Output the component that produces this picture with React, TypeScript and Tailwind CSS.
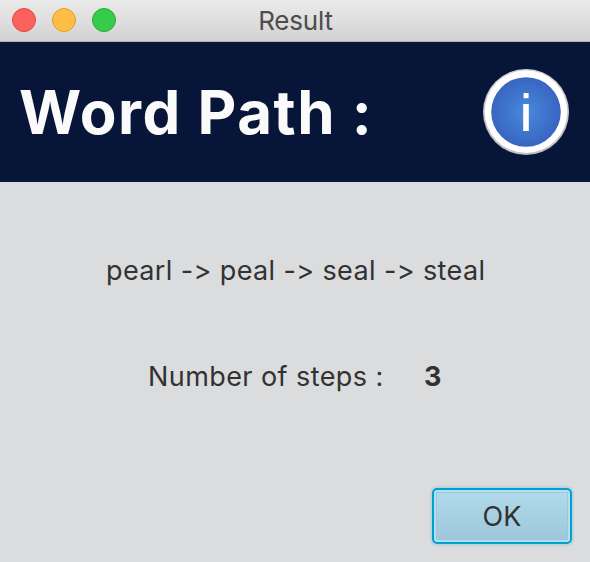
const trafficLights = [
  'bg-[#fc625d] border-[#e2463f]',
  'bg-[#fdbe41] border-[#df9e34]',
  'bg-[#35cb4b] border-[#27aa35]',
];

function TitleBar() {
  return (
    <header className="relative flex h-[42px] shrink-0 items-center gap-4 border-b border-[#b2b2b2] bg-linear-to-b from-[#ebebeb] to-[#d2d2d2] pb-[1px] pl-3">
      {trafficLights.map((tone) => (
        <span key={tone} className={`size-6 rounded-full border ${tone}`} />
      ))}
      <h1 className="absolute inset-x-0 top-0 pl-[1px] text-center text-[26px] leading-[41px] tracking-[-0.2px] text-[#4d4d4d]">
        Result
      </h1>
    </header>
  );
}

function InfoIcon() {
  return (
    <svg width="88" height="88" viewBox="0 0 88 88" aria-label="Information">
      <defs>
        <radialGradient id="info-fill">
          <stop offset="0" stopColor="#488add" />
          <stop offset="1" stopColor="#3865c0" />
        </radialGradient>
        <linearGradient id="info-rim" x1="0" y1="0" x2="0" y2="1">
          <stop offset="0" stopColor="#d4d4d4" />
          <stop offset="1" stopColor="#bdbfba" />
        </linearGradient>
      </defs>
      <circle cx="44" cy="44" r="43" fill="url(#info-rim)" />
      <circle cx="44" cy="43.7" r="41.3" fill="#fff" />
      <circle cx="44" cy="44" r="34.8" fill="url(#info-fill)" />
      <path d="M41.6 25h5v5.2h-5zM41.2 36h5.6v27h-5.6z" fill="#fff" />
    </svg>
  );
}

export default function App() {
  return (
    <div className="flex h-[562px] w-[590px] flex-col overflow-hidden bg-[#dbdcdd] font-['Inter','Liberation_Sans',sans-serif] text-[27px] leading-8 text-[#323232] [font-feature-settings:'calt'_0]">
      <TitleBar />
      <section className="flex h-[140px] shrink-0 items-center justify-between bg-[#061538] pr-5 pl-[19px]">
        <h2 className="text-[60px] leading-[140px] font-bold tracking-[1.5px] whitespace-nowrap text-[#fafafa]">
          Word Path :
        </h2>
        <InfoIcon />
      </section>
      <main className="flex flex-1 flex-col">
        <p className="mt-[73px] pl-[106px] tracking-[0.38px] whitespace-nowrap">
          pearl -&gt; peal -&gt; seal -&gt; steal
        </p>
        <div className="mt-[74px] flex pl-[148px] whitespace-nowrap">
          <span className="w-[276px] tracking-[0.42px]">Number of steps :</span>
          <strong className="font-bold">3</strong>
        </div>
        <button className="mt-auto mr-[18px] mb-[18px] h-[56px] w-[140px] self-end rounded-[5px] border-2 border-[#039ed3] bg-linear-to-b from-[#b1daeb] to-[#9dc6da] pt-[2px] text-center shadow-[0_0_0_2px_#bed4dc,inset_0_0_0_2px_#b5deee,inset_0_0_0_3px_#98c8dc]">
          OK
        </button>
      </main>
    </div>
  );
}
